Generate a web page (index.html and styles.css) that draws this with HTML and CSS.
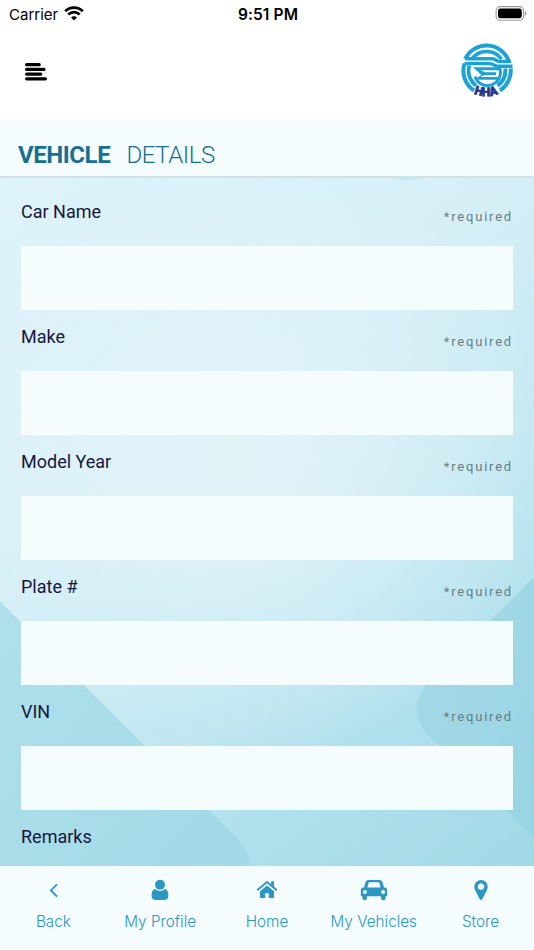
FILE: index.html
```html
<!DOCTYPE html>
<html lang="en">
<head>
    <meta charset="UTF-8">
    <title>Vehicle Details</title>
    <link rel="stylesheet" href="styles.css">
</head>
<body>
    <div class="status-bar">
        <div class="carrier">
            <span>Carrier</span>
            <svg width="20" height="15" viewBox="0 0 20 15">
                <path d="M1.2 5.2a12.6 12.6 0 0 1 17.6 0M4.3 8.5a8.1 8.1 0 0 1 11.4 0" fill="none" stroke="#000" stroke-width="2.7"/>
                <path d="M10 14.4l-3-3a4.2 4.2 0 0 1 6 0z"/>
            </svg>
        </div>
        <div class="time">9:51 PM</div>
        <svg class="battery" width="32" height="15" viewBox="0 0 32 15">
            <rect x="1.1" y=".6" width="27.5" height="13.6" rx="4" fill="none" stroke="#999" stroke-width="1.1"/>
            <rect x="3" y="2.5" width="23.8" height="9.8" rx="2.3"/>
            <path d="M29.9 5.2a2.4 2.4 0 0 1 0 4.4z" fill="#999"/>
        </svg>
    </div>

    <header>
        <button class="menu">
            <svg width="22" height="18" viewBox="0 0 22 18">
                <path d="M1.6 1.7h12.6M1.6 6.4h17.4M1.6 11.1h14.2M1.6 15.8h18.8" stroke="#000" stroke-width="3.2" stroke-linecap="round"/>
            </svg>
        </button>
        <svg class="logo" width="54" height="54" viewBox="0 0 54 54">
            <g fill="none" stroke="#1ba3d6">
                <path d="M14 46.5A23.7 23.7 0 0 1 4.5 19.5M5.2 14.8A23.7 23.7 0 0 1 48.5 16.5" stroke-width="4"/>
                <path d="M16 41.5A18.3 18.3 0 0 1 9.3 21.5M11.5 15.5A18.3 18.3 0 0 1 41.5 15" stroke-width="3.6"/>
                <path d="M40 46.5A23.7 23.7 0 0 0 50.7 24.5M37.5 41.5A18.3 18.3 0 0 0 45.3 24.5" stroke-width="4"/>
                <path d="M15 32.5A12.8 12.8 0 0 0 39.8 24.5" stroke-width="3"/>
                <path d="M5 14.8H32q2.5 0 4 1.3t4 1.3H51" stroke-width="3.4"/>
                <path d="M4.5 19.6H29.5q2.5 0 4.2 1.3t4 1.3H52.5" stroke-width="3.4"/>
            </g>
            <path d="M13 23.2h27.500v3H20.5l4.5 2h11v2.700H24.500l-4 2.200h18v2.700H14.500l6.800-4.900z" fill="#1ba3d6"/>
            <path id="arc" d="M8 46.5Q26 58 44 46.5" fill="none"/>
            <text class="logo-text"><textPath href="#arc" startOffset="50%" text-anchor="middle">HHA</textPath></text>
        </svg>
    </header>

    <div class="title">
        <h1><b>VEHICLE</b> <span>DETAILS</span></h1>
    </div>

    <main>
        <svg class="backdrop" width="534" height="688" viewBox="0 0 534 688">
            <defs>
                <linearGradient id="left" x1="0" y1="0" x2="1" y2="1">
                    <stop offset="0" stop-color="#afe0ec"/>
                    <stop offset="1" stop-color="#a2d9e7"/>
                </linearGradient>
                <linearGradient id="right" x1="0" y1="0" x2="1" y2="1">
                    <stop offset="0" stop-color="#a6dae8"/>
                    <stop offset="1" stop-color="#98d4e2"/>
                </linearGradient>
            </defs>
            <path d="M393 0Q407 5 422 0z" fill="#c5e9f3"/>
            <path d="M0 423L238 661Q249 673 250 688H0z" fill="url(#left)"/>
            <path d="M534 399L427 506Q406 530 427 556L534 660z" fill="url(#right)"/>
        </svg>
        <form>
            <div class="field">
                <label for="carName">Car Name</label><span class="required">*required</span>
                <input type="text" id="carName">
            </div>
            <div class="field">
                <label for="make">Make</label><span class="required">*required</span>
                <input type="text" id="make">
            </div>
            <div class="field">
                <label for="year">Model Year</label><span class="required">*required</span>
                <input type="text" id="year">
            </div>
            <div class="field">
                <label for="plate">Plate #</label><span class="required">*required</span>
                <input type="text" id="plate">
            </div>
            <div class="field">
                <label for="vin">VIN</label><span class="required">*required</span>
                <input type="text" id="vin">
            </div>
            <div class="field">
                <label>Remarks</label>
            </div>
        </form>
    </main>

    <nav>
        <a>
            <svg width="24" height="24" viewBox="0 0 24 24"><path d="M16 6.3L9.9 12.4l6.1 6.1" fill="none" stroke="#2c97c3" stroke-width="1.8"/></svg>
            Back
        </a>
        <a>
            <svg width="24" height="24" viewBox="0 0 24 24"><circle cx="12" cy="6.8" r="5"/><path d="M7.2 10.9C4.4 11.600 3.600 14 3.600 17.800c0 2.500 1.300 4.100 3.400 4.100h10c2.100 0 3.400-1.600 3.400-4.100 0-3.800-.8-6.200-3.600-6.900a6.500 6.500 0 0 1-9.600 0z"/></svg>
            My Profile
        </a>
        <a>
            <svg width="24" height="24" viewBox="0 0 24 24"><path d="M12 7.400l7 5.800v6.800h-5.200v-4.800h-3.600V20H5v-6.800z"/><path d="M2.200 12.200L12 4l9.800 8.200" fill="none" stroke="#2c97c3" stroke-width="1.800"/><path d="M16.100 3.300H19v6.600l-2.900-2.400z"/></svg>
            Home
        </a>
        <a>
            <svg width="28" height="24" viewBox="0 0 28 24"><path fill-rule="evenodd" d="M8.5 1.9h11c1.6 0 2.7 1 3.1 2.5l1.4 5.2h.8c1.3 0 2.3 1 2.3 2.4v6.3h-1.5v1.7a2.3 2.3 0 0 1-4.6 0v-1.7H7V20a2.3 2.3 0 0 1-4.6 0v-1.7H.9V12c0-1.4 1-2.4 2.3-2.4H4l1.4-5.2c.4-1.5 1.5-2.5 3.1-2.5zM8.800 4.200l-1.400 5.400h13.200l-1.400-5.400zM4.900 11.900a2 2 0 1 0 .01 0zm18.200 0a2 2 0 1 0 .01 0z"/></svg>
            My Vehicles
        </a>
        <a>
            <svg width="24" height="24" viewBox="0 0 24 24"><path fill-rule="evenodd" d="M12 1.9a6.7 6.7 0 0 1 6.7 6.8c0 1.2-.3 2.2-.8 3.2l-4.5 9c-.6 1.2-2.2 1.2-2.8 0l-4.5-9c-.5-1-.8-2-.8-3.2A6.7 6.7 0 0 1 12 1.9zm0 3.4a3.3 3.3 0 1 0 .01 0z"/></svg>
            Store
        </a>
    </nav>
</body>
</html>
```
FILE: styles.css
```css
* {
    box-sizing: border-box;
}
body {
    margin: 0;
    height: 950px;
    display: flex;
    flex-direction: column;
    overflow: hidden;
    background: white;
    font-family: Roboto, sans-serif;
}
.status-bar {
    height: 28px;
    padding: 0 7px 0 9px;
    display: grid;
    grid-template-columns: 1fr auto 1fr;
    align-items: center;
    font-family: Inter, sans-serif;
    font-size: 15px;
    color: #000;
}
.carrier {
    display: flex;
    align-items: center;
    gap: 6px;
}
.carrier svg {
    margin-bottom: 2px;
}
.time {
    font-weight: 600;
    font-size: 15.5px;
    letter-spacing: 0.1px;
}
.battery {
    justify-self: end;
    margin-bottom: 2px;
}
header {
    height: 92px;
    padding: 15px 20px 0 25px;
    display: flex;
    justify-content: space-between;
}
.menu {
    align-self: flex-start;
    height: 18px;
    margin-top: 20px;
    padding: 0;
    border: none;
    background: none;
}
.menu svg {
    display: block;
}
.logo {
    margin-top: 1px;
    overflow: visible;
}
.logo-text {
    font-weight: 900;
    font-size: 12px;
    fill: #25368f;
    stroke: #25368f;
    stroke-width: 0.7px;
}
.title {
    height: 58px;
    padding: 19px 18px 0;
    background: #f4fcfe;
    border-bottom: 2px solid #d3e1e4;
}
h1 {
    margin: 0;
    font-size: 24px;
    line-height: 32px;
    font-weight: 300;
    letter-spacing: -0.45px;
    color: #176f91;
}
h1 b {
    font-weight: 700;
    margin-right: 11px;
}
main {
    height: 688px;
    position: relative;
    background:
        radial-gradient(ellipse 330px 300px at 45% 42%, rgba(232, 246, 250, 0.8), rgba(232, 246, 250, 0)),
        linear-gradient(143deg, #def3fa 0%, #d6eff7 35%, #c7e9f2 55%, #b0e0ed 76%, #a2d9e7 100%);
}
.backdrop {
    position: absolute;
    top: 0;
    left: 0;
}
form {
    position: relative;
    padding: 18px 21px 0;
}
.field {
    height: 125.1px;
    display: grid;
    grid-template-columns: 1fr auto;
    grid-template-rows: 49.5px 64.5px;
}
label {
    font-size: 18px;
    line-height: 32px;
    color: #17173d;
}
.required {
    padding-top: 9px;
    font-size: 13px;
    line-height: 23px;
    letter-spacing: 1.8px;
    color: #668087;
}
input {
    grid-column: 1 / 3;
    width: 100%;
    height: 64.5px;
    padding: 8px;
    border: none;
    background: #f4fcfe;
    font-size: 18px;
}
nav {
    height: 84px;
    display: grid;
    grid-template-columns: repeat(5, 1fr);
    background: #f4fcfe;
}
nav a {
    padding-top: 12px;
    display: flex;
    flex-direction: column;
    align-items: center;
    gap: 10px;
    font-family: Inter, sans-serif;
    font-size: 15.3px;
    line-height: 20px;
    font-weight: 300;
    color: #2c97c3;
}
nav svg {
    fill: #2c97c3;
}
```
